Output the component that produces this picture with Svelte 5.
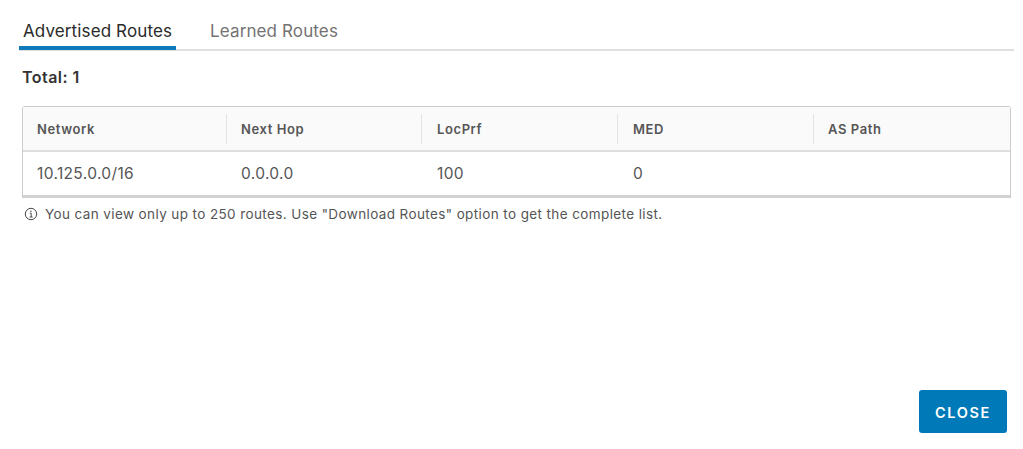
<script>
  const columns = ['Network', 'Next Hop', 'LocPrf', 'MED', 'AS Path'];
  const row = ['10.125.0.0/16', '0.0.0.0', '100', '0', ''];
</script>

<div class="page">
  <nav class="tabs">
    <button class="tab active">Advertised Routes</button>
    <button class="tab">Learned Routes</button>
  </nav>
  <h2 class="total">Total: 1</h2>
  <div class="grid">
    <div class="head">
      {#each columns as c}
        <div class="hcell">{c}</div>
      {/each}
    </div>
    <div class="row">
      {#each row as v}
        <div class="cell">{v}</div>
      {/each}
    </div>
  </div>
  <p class="note">
    <svg width="14" height="14" viewBox="0 0 14 14" fill="none" stroke="#4a4a4a">
      <circle cx="7" cy="7" r="5.7" stroke-width="1" />
      <path d="M5.8 6.2H7.2V10M5.6 10H8.6" stroke-width="1" />
      <circle cx="6.9" cy="4.2" r="0.8" fill="#4a4a4a" stroke="none" />
    </svg>
    <span>You can view only up to 250 routes. Use "Download Routes" option to get the complete list.</span>
  </p>
  <div class="footer">
    <button class="close">CLOSE</button>
  </div>
</div>

<style>
  :global(body) {
    margin: 0;
    background: #fff;
  }
  .page {
    box-sizing: border-box;
    width: 1023px;
    height: 449px;
    padding: 0 9px 16px 19px;
    display: flex;
    flex-direction: column;
    font-family: Inter, "Liberation Sans", sans-serif;
    color: #4a4a4a;
  }
  .tabs {
    display: flex;
    gap: 30px;
    height: 51px;
    box-sizing: border-box;
    border-bottom: 2px solid #e0e0e0;
    flex: none;
  }
  .tab {
    all: unset;
    box-sizing: border-box;
    height: 50px;
    padding: 16px 4px 0;
    border-bottom: 4px solid transparent;
    font-size: 17px;
    letter-spacing: 0.12px;
    line-height: 20px;
    color: #737373;
  }
  .tab.active {
    color: #2a2a2a;
    border-bottom-color: #0f79b9;
  }
  .total {
    margin: 16px 0 0 3px;
    font-size: 16px;
    letter-spacing: 0.45px;
    line-height: 20px;
    font-weight: 600;
    color: #333;
  }
  .grid {
    margin: 19px 3px 0 3px;
    width: 989px;
    box-sizing: border-box;
    border: 1px solid #ccc;
    border-bottom: 0;
    border-radius: 3px 3px 0 0;
    flex: none;
  }
  .head,
  .row {
    display: grid;
    grid-template-columns: 204px 195px 196px 196px 1fr;
  }
  .head {
    height: 45px;
    box-sizing: border-box;
    background: #fafafa;
    border-bottom: 2px solid #dedede;
    align-items: center;
  }
  .hcell {
    height: 30px;
    line-height: 31px;
    padding-left: 14px;
    box-sizing: border-box;
    font-size: 13px;
    letter-spacing: 0.6px;
    font-weight: 600;
    color: #565656;
    border-right: 1px solid #e4e4e4;
  }
  .hcell:nth-child(3),
  .hcell:nth-child(4) { padding-left: 15px; }
  .hcell:last-child { border-right: 0; }
  .row {
    height: 46px;
    box-sizing: border-box;
    border-bottom: 3px solid #d2d2d2;
    align-items: center;
  }
  .cell {
    padding-left: 14px;
    font-size: 15.5px;
    letter-spacing: 0.36px;
    line-height: 20px;
    color: #555;
  }
  .cell:nth-child(3),
  .cell:nth-child(4) { padding-left: 15px; }
  .note {
    margin: 7px 0 0 5px;
    display: flex;
    align-items: center;
    gap: 7px;
    font-size: 13.5px;
    letter-spacing: 0.39px;
    line-height: 18px;
    color: #555;
  }
  .footer {
    margin-top: auto;
    display: flex;
    justify-content: flex-end;
    padding-right: 7px;
  }
  .close {
    all: unset;
    box-sizing: border-box;
    width: 88px;
    height: 43px;
    text-align: center;
    background: #0079b8;
    border-radius: 3px;
    color: #fff;
    font-size: 14.5px;
    font-weight: 600;
    letter-spacing: 1.6px;
    line-height: 45px;
  }
</style>
